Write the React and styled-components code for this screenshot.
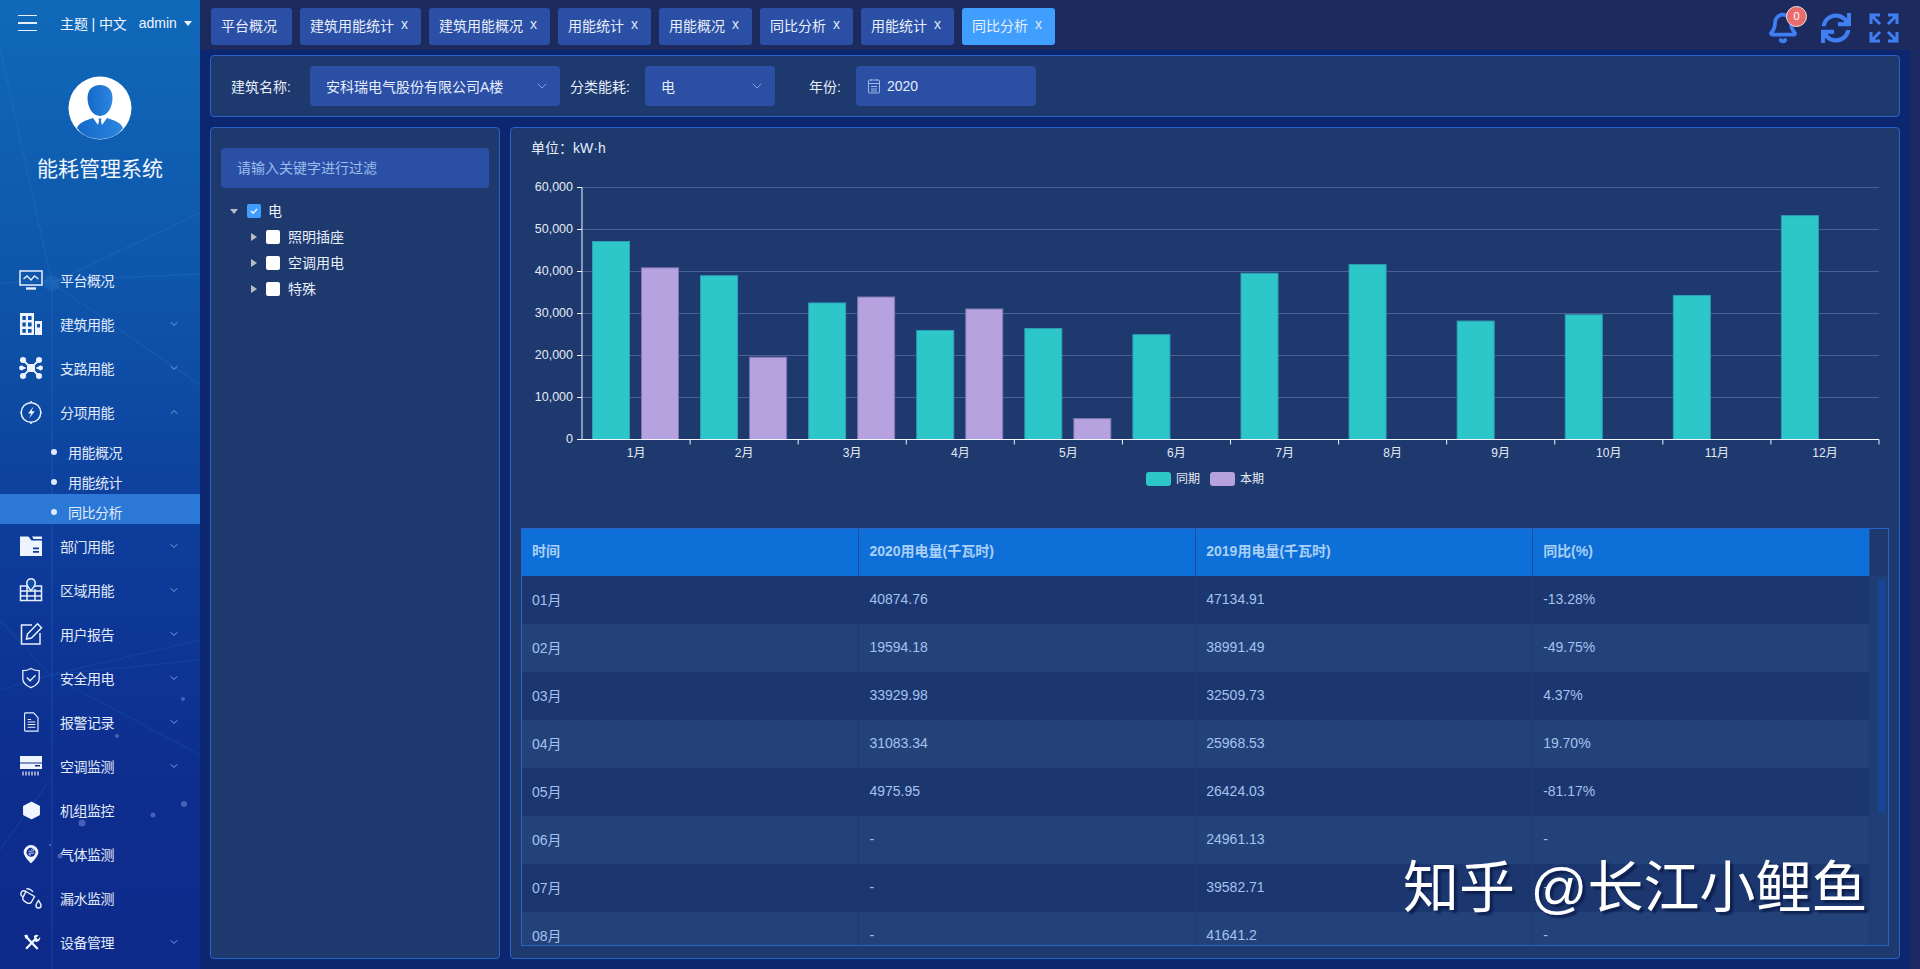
import React from "react";
import styled, { createGlobalStyle } from "styled-components";
import { Bell, ChevronDown, ChevronUp } from "lucide-react";
import { FaSync } from "react-icons/fa";

const GlobalStyle = createGlobalStyle`
  html, body {
    margin: 0;
    padding: 0;
    background: #0c2670;
    font-family: "Liberation Sans", "Noto Sans CJK SC", sans-serif;
    font-size: 14px;
  }
  * { box-sizing: border-box; }
`;

const Page = styled.div`
  display: flex;
  width: 100%;
  height: 100vh;
  overflow: hidden;
  position: relative;
`;

/* ---------- sidebar ---------- */
const Sidebar = styled.aside`
  position: relative;
  flex: 0 0 200px;
  height: 100%;
  overflow: hidden;
  background: linear-gradient(180deg, #1069b9 0%, #0e55aa 30%, #0d3d9b 55%, #0d2f90 78%, #0e2a8a 100%);
  color: #e6eefc;
`;

const SideDecor = styled.svg`
  position: absolute;
  left: 0;
  top: 0;
  pointer-events: none;
`;

const SideContent = styled.div`
  position: relative;
`;

const SideTop = styled.div`
  display: flex;
  align-items: center;
  height: 47px;
  padding: 0 0 1px 18px;
  color: #f0f5ff;
`;

const Burger = styled.div`
  display: flex;
  flex-direction: column;
  gap: 6px;
  width: 19px;
  margin-right: 23px;
  span {
    display: block;
    height: 1.5px;
    background: #e8f0ff;
  }
`;

const TopLinks = styled.span`
  letter-spacing: -0.1px;
  white-space: nowrap;
`;

const UserName = styled.span`
  margin-left: 12px;
  white-space: nowrap;
`;

const Caret = styled.i`
  margin-left: 7px;
  border-left: 4.5px solid transparent;
  border-right: 4.5px solid transparent;
  border-top: 5px solid #eef4ff;
`;

const AvatarRow = styled.div`
  display: flex;
  justify-content: center;
  margin-top: 29px;
`;

const SystemTitle = styled.div`
  margin-top: 15px;
  text-align: center;
  font-size: 21px;
  line-height: 28px;
  color: #f1f6ff;
`;

const Menu = styled.nav`
  margin-top: 75px;
`;

const MenuRow = styled.div`
  display: flex;
  align-items: center;
  height: 44px;
  padding-left: 20px;
  padding-right: 20px;
`;

const MenuIcon = styled.span`
  display: flex;
  align-items: center;
  justify-content: center;
  width: 22px;
  height: 24px;
  margin-right: 18px;
`;

const MenuText = styled.span`
  flex: 1;
  letter-spacing: -0.5px;
  color: #e2ebfb;
`;

const SubRow = styled.div`
  display: flex;
  align-items: center;
  height: 30px;
  padding: 5px 0 0 51px;
  background: ${(p) => (p.$active ? "#2b78d6" : "transparent")};
  letter-spacing: -0.5px;
  color: #e2ebfb;
`;

const SubDot = styled.i`
  width: 6px;
  height: 6px;
  margin-right: 11px;
  border-radius: 50%;
  background: #dfe9fb;
`;

/* ---------- right side ---------- */
const RightSide = styled.div`
  flex: 1;
  display: flex;
  flex-direction: column;
  min-width: 0;
`;

const TopBar = styled.header`
  flex: 0 0 50px;
  display: flex;
  align-items: flex-start;
  justify-content: space-between;
  padding: 8px 21px 0 11px;
  background: #1d2a5e;
`;

const Tabs = styled.div`
  display: flex;
  gap: 8px;
`;

const Tab = styled.div`
  display: flex;
  align-items: center;
  height: 37px;
  padding: 0 ${(p) => (p.$closable ? "13px" : "15px")} 3px 10px;
  border-radius: 3px;
  background: ${(p) => (p.$active ? "#409eff" : "#2a4fa5")};
  color: #e9f0fc;
  white-space: nowrap;
`;

const TabClose = styled.span`
  margin-left: 7px;
  color: #dfe8fa;
  position: relative;
  top: -1px;
`;

const Tools = styled.div`
  display: flex;
  align-items: center;
  height: 34px;
  margin-top: 3px;
  color: #3f7ff2;
`;

const BellWrap = styled.div`
  position: relative;
  display: flex;
  margin-right: 22px;
`;

const Badge = styled.span`
  position: absolute;
  left: 19px;
  top: -6px;
  width: 21px;
  height: 21px;
  line-height: 18px;
  border: 1.5px solid #f5e4e4;
  border-radius: 50%;
  background: #e96c6c;
  color: #fff;
  font-size: 11px;
  text-align: center;
`;

const ToolGap = styled.span`
  width: 18px;
`;

const ContentRow = styled.div`
  flex: 1;
  display: flex;
  min-height: 0;
`;

const Strip = styled.div`
  flex: 0 0 10px;
  background: #1b2a60;
`;

const Content = styled.main`
  flex: 1;
  display: flex;
  flex-direction: column;
  gap: 10px;
  min-width: 0;
  padding: 5px 10px 10px;
  background: #0c2670;
`;

const Panel = styled.section`
  border: 1px solid #2b62c6;
  border-radius: 4px;
  background: #1e396e;
`;

const FilterPanel = styled(Panel)`
  flex: 0 0 62px;
  display: flex;
  align-items: center;
  padding-left: 20px;
  color: #e6eefc;
`;

const FilterLabel = styled.label`
  flex: 0 0 ${(p) => p.$width}px;
  margin-left: ${(p) => p.$left || 0}px;
  padding-bottom: 1px;
`;

const SelectBox = styled.div`
  flex: 0 0 ${(p) => p.$width}px;
  display: flex;
  align-items: center;
  justify-content: space-between;
  height: 40px;
  padding: 0 10px 1px 16px;
  border-radius: 4px;
  background: #2a4fa5;
  color: #e6eefc;
  svg { color: #9db7e6; }
`;

const DateBox = styled(SelectBox)`
  justify-content: flex-start;
  gap: 6px;
  padding-left: 11px;
`;

const Lower = styled.div`
  flex: 1;
  display: flex;
  gap: 10px;
  min-height: 0;
`;

const TreePanel = styled(Panel)`
  flex: 0 0 290px;
  padding: 20px 10px 0;
`;

const FilterInput = styled.input`
  display: block;
  width: 100%;
  height: 40px;
  padding: 0 16px;
  border: 0;
  border-radius: 4px;
  outline: 0;
  background: #2a4fa5;
  color: #e6eefc;
  font: inherit;
  &::placeholder { color: #9dbdee; opacity: 1; }
`;

const Tree = styled.div`
  margin-top: 10px;
`;

const TreeRow = styled.div`
  display: flex;
  align-items: center;
  height: 26px;
  padding-left: ${(p) => (p.$child ? 29 : 9)}px;
  color: #e8f0fc;
`;

const TreeArrow = styled.i`
  flex: 0 0 8px;
  width: 0;
  height: 0;
  margin-right: ${(p) => (p.$open ? 9 : 7)}px;
  ${(p) =>
    p.$open
      ? `border-left: 4.5px solid transparent; border-right: 4.5px solid transparent; border-top: 5.5px solid #b7bcc8;`
      : `border-top: 4.5px solid transparent; border-bottom: 4.5px solid transparent; border-left: 6px solid #b7bcc8; margin-left: 1px;`}
`;

const CheckBox = styled.span`
  display: flex;
  align-items: center;
  justify-content: center;
  width: 14px;
  height: 14px;
  margin-right: ${(p) => (p.$checked ? 7 : 8)}px;
  border-radius: 2px;
  background: ${(p) => (p.$checked ? "#409eff" : "#fff")};
`;

const TreeLabel = styled.span`
  position: relative;
  top: -1px;
`;

const ChartPanel = styled(Panel)`
  flex: 1;
  display: flex;
  flex-direction: column;
  min-width: 0;
  padding: 0 10px 12px;
`;

const UnitLine = styled.div`
  flex: 0 0 39px;
  line-height: 40px;
  padding-left: 10px;
  color: #e6eefc;
  font-size: 14px;
`;

const ChartSvg = styled.svg`
  display: block;
  flex: 0 0 350px;
  margin-bottom: 10px;
  font-family: "Liberation Sans", "Noto Sans CJK SC", sans-serif;
`;

const TableFrame = styled.div`
  flex: 1;
  display: flex;
  min-height: 0;
  border: 1px solid #2b62c6;
`;

const TableClip = styled.div`
  flex: 1;
  min-width: 0;
  overflow: hidden;
`;

const DataTable = styled.table`
  width: 100%;
  table-layout: fixed;
  border-collapse: collapse;
`;

const HeadCell = styled.th`
  height: 47px;
  padding: 0 10px 6px;
  border-right: 1px solid #1e4f94;
  background: #0f6fd8;
  color: #a9d0f6;
  font-size: 14px;
  text-align: left;
`;

const BodyRow = styled.tr`
  background: ${(p) => (p.$even ? "#24427a" : "#1c376f")};
`;

const BodyCell = styled.td`
  height: 48px;
  padding: 0 10px 3px;
  border-right: 1px solid #1e3a72;
  color: #a3c2ee;
  font-size: 14px;
`;

const Gutter = styled.div`
  flex: 0 0 18px;
  display: flex;
  flex-direction: column;
  padding-top: 47px;
`;

const Track = styled.div`
  flex: 1;
  padding: 3px 0 0 8px;
  background: #1f3d76;
`;

const Thumb = styled.div`
  width: 8px;
  height: 234px;
  border-radius: 4px;
  background: #1a4592;
`;

const Watermark = styled.div`
  position: absolute;
  left: 1403px;
  top: 850px;
  font-size: 56px;
  line-height: 76px;
  color: #fff;
  white-space: nowrap;
  text-shadow: 3px 3px 2px rgba(10, 25, 70, 0.75);
  pointer-events: none;
`;

/* ---------- icons ---------- */
const Svg = ({ children, w = 22, h = 22 }) => (
  <svg width={w} height={h} viewBox="1 1 22 22" overflow="visible" fill="none" stroke="#e9f0fd" strokeWidth="1.5">
    {children}
  </svg>
);

const MonitorIcon = () => (
  <Svg>
    <rect x="1" y="3" width="22" height="14" />
    <path d="M4.5 11l3.5-3 4 4 3.5-4 4 3" strokeWidth="1.4" />
    <path d="M7 20.5h10" strokeWidth="2.4" />
  </Svg>
);
const BuildingIcon = () => (
  <Svg h={24}>
    <path
      fillRule="evenodd"
      stroke="none"
      fill="#eef4ff"
      d="M1 1h14v22H1zM3.4 4v4h3.4V4zM9 4v4h3.6V4zM3.4 10.5v4h3.4v-4zM9 10.5v4h3.6v-4zM3.4 17v3.8h3.4V17zM9 17v3.8h3.6V17zM16 9h7v14h-7zM18 12v3.5h3V12z"
    />
  </Svg>
);
const BranchIcon = () => (
  <Svg>
    <rect x="8" y="8" width="8" height="8" fill="#eef4ff" stroke="none" />
    <path d="M4 4l6 6M20 4l-6 6M4 20l6-6M20 20l-6-6M1.500 12h5M22.500 12h-5" strokeWidth="1.800" />
    <g fill="#eef4ff" stroke="none">
      <circle cx="4" cy="4" r="3" />
      <circle cx="20" cy="4" r="3" />
      <circle cx="4" cy="20" r="3" />
      <circle cx="20" cy="20" r="3" />
      <circle cx="2.500" cy="12" r="2.400" />
      <circle cx="21.500" cy="12" r="2.400" />
    </g>
  </Svg>
);
const PowerDialIcon = () => (
  <Svg>
    <circle cx="12" cy="12.500" r="9.800" />
    <path d="M12 2.700V1M12 24v-1.700M1.500 12.500h1M21.500 12.500h1" />
    <path d="M14.500 6.500l-5.500 7h3.200l-2.200 5 5.800-7.200h-3.200z" fill="#eef4ff" stroke="none" />
  </Svg>
);
const FolderIcon = () => (
  <Svg>
    <path
      fillRule="evenodd"
      stroke="none"
      fill="#eef4ff"
      d="M1 2.500h8.500l3 4H23v15.500H1zM14 13.500v1.700h6v-1.700zM14 17v1.700h6V17zM13 2.500h10v2.500H14.500z"
    />
  </Svg>
);
const AreaIcon = () => (
  <Svg h={24}>
    <path d="M8 8H1.500v14.500h21V8H16M1.500 13h21M1.500 18h21M8 8v14.500M16 11v11.500" strokeWidth="1.500" />
    <path
      d="M12 .8a4.300 4.300 0 0 0-4.300 4.300c0 3 4.300 7.500 4.300 7.500s4.300-4.500 4.300-7.500A4.300 4.300 0 0 0 12 .8z"
      fill="#0e4fa5"
      strokeWidth="1.500"
    />
  </Svg>
);
const EditIcon = () => (
  <Svg>
    <path d="M13 3H2.500v19h18.500V11" />
    <path d="M7.500 17l1-5L18.500 1.800l4 4L12.500 16z" fill="none" />
  </Svg>
);
const ShieldIcon = () => (
  <Svg w={20}>
    <path d="M12 1.500c3 1.800 6 2.500 9 2.500v9c0 4.500-4 7.500-9 9.500-5-2-9-5-9-9.500V4c3 0 6-.7 9-2.500z" strokeWidth="1.400" />
    <path d="M7.500 11.500l3.500 3.500 6-6" strokeWidth="1.500" />
  </Svg>
);
const DocIcon = () => (
  <Svg w={19}>
    <path d="M5 1.500h9.500l5 5.500v15.500H5a1 1 0 0 1-1-1v-19a1 1 0 0 1 1-1z" strokeWidth="1.300" />
    <path d="M7.500 12h9M7.500 15h9M7.500 18h9M7.500 9h4" strokeWidth="1.200" />
  </Svg>
);
const AcIcon = () => (
  <Svg>
    <path
      fillRule="evenodd"
      stroke="none"
      fill="#eef4ff"
      d="M1 2h22v13H1zM1 8.500v1h22v-1zM16 11v1.500h5V11z"
    />
    <path d="M4 17.500v4M7 17.500v4M10 17.500v4M13 17.500v4M16 17.500v4M19 17.500v4" strokeWidth="1.200" />
  </Svg>
);
const HexIcon = () => (
  <Svg w={19} h={19}>
    <path d="M12 2.500l9 4.800v9.400l-9 4.800-9-4.800V7.300z" fill="#f2f6ff" stroke="#f2f6ff" strokeLinejoin="round" />
  </Svg>
);
const GasIcon = () => (
  <Svg w={18} h={20}>
    <path
      fillRule="evenodd"
      stroke="none"
      fill="#f2f6ff"
      d="M12 1a9 9 0 0 0-9 9c0 5.500 9 13.500 9 13.500S21 15.500 21 10a9 9 0 0 0-9-9zm0 3.500a5.500 5.500 0 1 1 0 11 5.500 5.500 0 0 1 0-11z"
    />
    <path d="M9 8.500h5a1.500 1.500 0 1 0-1.400-1.800M9 11h7M9 13h3" stroke="#dbe6fa" strokeWidth="1.100" />
  </Svg>
);
const LeakIcon = () => (
  <Svg>
    <path d="M7 5.500l8.500 5-3 5.500c-1 1.500-3 1.700-5 .6s-4.500-3-3.700-5z" strokeWidth="1.400" />
    <path d="M7 5.500C5 4.500 3 5 2.300 6.300S2.200 9.800 4 11" strokeWidth="1.400" />
    <path d="M7.500 3c1.800-.8 5 .6 6.500 2.800" strokeWidth="1.400" />
    <path d="M19.500 14.500c-1.300 2-2.500 3.500-2.500 5a2.500 2.500 0 0 0 5 0c0-1.500-1.200-3-2.500-5z" strokeWidth="1.400" />
  </Svg>
);
const ToolsIcon = () => (
  <Svg w={17} h={17}>
    <path d="M5 20L18 6.500" stroke="#f2f6ff" strokeWidth="3" />
    <path d="M15 4a5 5 0 0 1 6.200-1.200l-3.200 3 2.200 2.200 3-3A5 5 0 0 1 17 11z" fill="#f2f6ff" stroke="none" />
    <path d="M5 4.500L20 20.500" stroke="#f2f6ff" strokeWidth="3" />
    <path d="M2.500 2.500l4-1 1.500 4-3.500 1.500z" fill="#f2f6ff" stroke="none" />
  </Svg>
);

const AvatarSvg = () => (
  <svg width="64" height="64" viewBox="0 0 64 64">
    <defs>
      <linearGradient id="avatarBlue" x1="0" x2="1" y1="0" y2="0">
        <stop offset="0" stopColor="#1468c8" />
        <stop offset="1" stopColor="#2e86e0" />
      </linearGradient>
    </defs>
    <circle cx="32" cy="32" r="31.500" fill="#fff" />
    <path d="M19.500 22c0-8 5-13 12.500-13s12.500 5 12.500 13c0 9-5 18-12.500 18S19.500 31 19.500 22z" fill="url(#avatarBlue)" />
    <path
      d="M9 52c2-5 7-7 13-9l3-1 5 7 2-2 2 2 5-7 3 1c6 2 11 4 13 9-5 7-13 11-23 11S14 59 9 52z"
      fill="url(#avatarBlue)"
    />
    <path d="M30.500 42.500h3l-.5 2.500 1 4-2 2.500-2-2.500 1-4z" fill="url(#avatarBlue)" />
  </svg>
);

const CalendarIcon = () => (
  <svg width="14" height="16" viewBox="0 0 14 16" fill="none" stroke="#9db7e6" strokeWidth="1">
    <rect x="1.500" y="2" width="11" height="13" rx="1" />
    <path d="M1.500 5.500h11M4 1v2M10 1v2M4 8.500h6M4 11h6M4 13h6" />
  </svg>
);

const FullscreenIcon = () => (
  <svg width="30" height="30" viewBox="0 0 30 30" fill="none" stroke="#3f7ff2" strokeWidth="3">
    <path d="M2 11V2h9M3 3l8 8M28 11V2h-9M27 3l-8 8M2 19v9h9M3 27l8-8M28 19v9h-9M27 27l-8-8" />
  </svg>
);

/* ---------- data ---------- */
const tabs = ["建筑用能统计", "建筑用能概况", "用能统计", "用能概况", "同比分析", "用能统计", "同比分析"];

const menuTop = [
  { label: "平台概况", Icon: MonitorIcon },
  { label: "建筑用能", Icon: BuildingIcon, more: true },
  { label: "支路用能", Icon: BranchIcon, more: true },
];
const menuBottom = [
  { label: "部门用能", Icon: FolderIcon, more: true },
  { label: "区域用能", Icon: AreaIcon, more: true },
  { label: "用户报告", Icon: EditIcon, more: true },
  { label: "安全用电", Icon: ShieldIcon, more: true },
  { label: "报警记录", Icon: DocIcon, more: true },
  { label: "空调监测", Icon: AcIcon, more: true },
  { label: "机组监控", Icon: HexIcon },
  { label: "气体监测", Icon: GasIcon },
  { label: "漏水监测", Icon: LeakIcon },
  { label: "设备管理", Icon: ToolsIcon, more: true },
];

const lastYear = [47134.91, 38991.49, 32509.73, 25968.53, 26424.03, 24961.13, 39582.71, 41641.2, 28200, 29700, 34300, 53300];
const thisYear = [40874.76, 19594.18, 33929.98, 31083.34, 4975.95];

const rows = [
  ["01月", "40874.76", "47134.91", "-13.28%"],
  ["02月", "19594.18", "38991.49", "-49.75%"],
  ["03月", "33929.98", "32509.73", "4.37%"],
  ["04月", "31083.34", "25968.53", "19.70%"],
  ["05月", "4975.95", "26424.03", "-81.17%"],
  ["06月", "-", "24961.13", "-"],
  ["07月", "-", "39582.71", "-"],
  ["08月", "-", "41641.2", "-"],
];

/* ---------- chart ---------- */
const CHART = { left: 61, right: 1358, top: 19.5, bottom: 271.5 };

function EnergyChart() {
  const band = (CHART.right - CHART.left) / 12;
  const yOf = (v) => CHART.bottom - (v / 60000) * (CHART.bottom - CHART.top);
  const ticks = [0, 10000, 20000, 30000, 40000, 50000, 60000];
  return (
    <ChartSvg width="1368" height="350" viewBox="0 0 1368 350">
      {ticks.map((t) => (
        <g key={t}>
          {t > 0 && <line x1={CHART.left} x2={CHART.right} y1={yOf(t)} y2={yOf(t)} stroke="#4a6094" />}
          <line x1={CHART.left - 5} x2={CHART.left} y1={yOf(t)} y2={yOf(t)} stroke="#f2f5fb" />
          <text x={CHART.left - 9} y={yOf(t) + 3} textAnchor="end" fontSize="12.500" fill="#e3eaf6">
            {t.toLocaleString("en-US")}
          </text>
        </g>
      ))}
      {lastYear.map((v, i) => {
        const x = CHART.left + band * i;
        const cur = thisYear[i];
        return (
          <g key={i}>
            <rect x={x + 10.500} y={yOf(v)} width="37" height={CHART.bottom - yOf(v)} fill="#2ec7c9" stroke="#2f9fb6" />
            {cur !== undefined && (
              <rect x={x + 59.500} y={yOf(cur)} width="37" height={CHART.bottom - yOf(cur)} fill="#b6a2de" stroke="#7d75b4" />
            )}
            <line x1={x + band} x2={x + band} y1={CHART.bottom} y2={CHART.bottom + 5} stroke="#f2f5fb" />
            <text x={x + band / 2} y={CHART.bottom + 17} textAnchor="middle" fontSize="12" fill="#e3eaf6">
              {i + 1}月
            </text>
          </g>
        );
      })}
      <line x1={CHART.left} x2={CHART.left} y1={CHART.top} y2={CHART.bottom} stroke="#f2f5fb" />
      <line x1={CHART.left} x2={CHART.right} y1={CHART.bottom} y2={CHART.bottom} stroke="#f2f5fb" />
      <rect x="625" y="304" width="25" height="14" rx="3" fill="#2ec7c9" />
      <text x="655" y="315" fontSize="12" fill="#e3eaf6">同期</text>
      <rect x="689" y="304" width="25" height="14" rx="3" fill="#b6a2de" />
      <text x="719" y="315" fontSize="12" fill="#e3eaf6">本期</text>
    </ChartSvg>
  );
}

function MenuItem({ item, up }) {
  const { label, Icon, more } = item;
  return (
    <MenuRow>
      <MenuIcon>
        <Icon />
      </MenuIcon>
      <MenuText>{label}</MenuText>
      {more && (up ? <ChevronUp size={12} color="#7ea3dc" /> : <ChevronDown size={12} color="#7ea3dc" />)}
    </MenuRow>
  );
}

export default function App() {
  return (
    <Page>
      <GlobalStyle />
      <Sidebar>
        <SideDecor width="200" height="969" viewBox="0 0 200 969" fill="none">
          <g stroke="#3d8ad6" strokeOpacity="0.18" strokeWidth="1.500">
            <path d="M0 48L52 283M52 283L200 213M0 283L200 274M52 283L200 385M52 283V969" />
            <path d="M0 620L50 675L200 755M0 690L50 675L200 640M50 675L200 660M50 780L0 850" strokeOpacity="0.12" />
          </g>
          <circle cx="52" cy="283" r="8" fill="#3d8ad6" fillOpacity="0.22" />
          <g fill="#7f8fe0" fillOpacity="0.5">
            <circle cx="183" cy="699" r="2" />
            <circle cx="117" cy="736" r="2" />
            <circle cx="184" cy="804" r="3" />
            <circle cx="153" cy="815" r="2.500" />
            <circle cx="82" cy="823" r="3.500" />
            <circle cx="60" cy="856" r="2.500" />
            <circle cx="50" cy="845" r="1.200" />
          </g>
        </SideDecor>
        <SideContent>
          <SideTop>
            <Burger>
              <span />
              <span />
              <span />
            </Burger>
            <TopLinks>主题 | 中文</TopLinks>
            <UserName>admin</UserName>
            <Caret />
          </SideTop>
          <AvatarRow>
            <AvatarSvg />
          </AvatarRow>
          <SystemTitle>能耗管理系统</SystemTitle>
          <Menu>
            {menuTop.map((m) => (
              <MenuItem key={m.label} item={m} />
            ))}
            <MenuItem item={{ label: "分项用能", Icon: PowerDialIcon, more: true }} up />
            <SubRow>
              <SubDot />
              用能概况
            </SubRow>
            <SubRow>
              <SubDot />
              用能统计
            </SubRow>
            <SubRow $active>
              <SubDot />
              同比分析
            </SubRow>
            {menuBottom.map((m) => (
              <MenuItem key={m.label} item={m} />
            ))}
          </Menu>
        </SideContent>
      </Sidebar>

      <RightSide>
        <TopBar>
          <Tabs>
            <Tab>平台概况</Tab>
            {tabs.map((t, i) => (
              <Tab key={i} $closable $active={i === tabs.length - 1}>
                {t}
                <TabClose>x</TabClose>
              </Tab>
            ))}
          </Tabs>
          <Tools>
            <BellWrap>
              <Bell size={32} strokeWidth={2.8} />
              <Badge>0</Badge>
            </BellWrap>
            <FaSync size={30} />
            <ToolGap />
            <FullscreenIcon />
          </Tools>
        </TopBar>
        <ContentRow>
          <Content>
            <FilterPanel>
              <FilterLabel $width={79}>建筑名称:</FilterLabel>
              <SelectBox $width={250}>
                安科瑞电气股份有限公司A楼
                <ChevronDown size={16} strokeWidth={1.2} />
              </SelectBox>
              <FilterLabel $width={75} $left={10}>分类能耗:</FilterLabel>
              <SelectBox $width={130}>
                电
                <ChevronDown size={16} strokeWidth={1.2} />
              </SelectBox>
              <FilterLabel $width={47} $left={34}>年份:</FilterLabel>
              <DateBox $width={180}>
                <CalendarIcon />
                2020
              </DateBox>
            </FilterPanel>
            <Lower>
              <TreePanel>
                <FilterInput placeholder="请输入关键字进行过滤" />
                <Tree>
                  <TreeRow>
                    <TreeArrow $open />
                    <CheckBox $checked>
                      <svg width="10" height="10" viewBox="0 0 10 10" fill="none" stroke="#fff" strokeWidth="1.200">
                        <path d="M2 5l2.200 2.200L8 3" />
                      </svg>
                    </CheckBox>
                    <TreeLabel>电</TreeLabel>
                  </TreeRow>
                  {["照明插座", "空调用电", "特殊"].map((t) => (
                    <TreeRow key={t} $child>
                      <TreeArrow />
                      <CheckBox />
                      <TreeLabel>{t}</TreeLabel>
                    </TreeRow>
                  ))}
                </Tree>
              </TreePanel>
              <ChartPanel>
                <UnitLine>单位：kW·h</UnitLine>
                <EnergyChart />
                <TableFrame>
                  <TableClip>
                    <DataTable>
                      <thead>
                        <tr>
                          <HeadCell>时间</HeadCell>
                          <HeadCell>2020用电量(千瓦时)</HeadCell>
                          <HeadCell>2019用电量(千瓦时)</HeadCell>
                          <HeadCell>同比(%)</HeadCell>
                        </tr>
                      </thead>
                      <tbody>
                        {rows.map((r, i) => (
                          <BodyRow key={r[0]} $even={i % 2 === 1}>
                            {r.map((c, j) => (
                              <BodyCell key={j}>{c}</BodyCell>
                            ))}
                          </BodyRow>
                        ))}
                      </tbody>
                    </DataTable>
                  </TableClip>
                  <Gutter>
                    <Track>
                      <Thumb />
                    </Track>
                  </Gutter>
                </TableFrame>
              </ChartPanel>
            </Lower>
          </Content>
          <Strip />
        </ContentRow>
      </RightSide>
      <Watermark>知乎 @长江小鲤鱼</Watermark>
    </Page>
  );
}
